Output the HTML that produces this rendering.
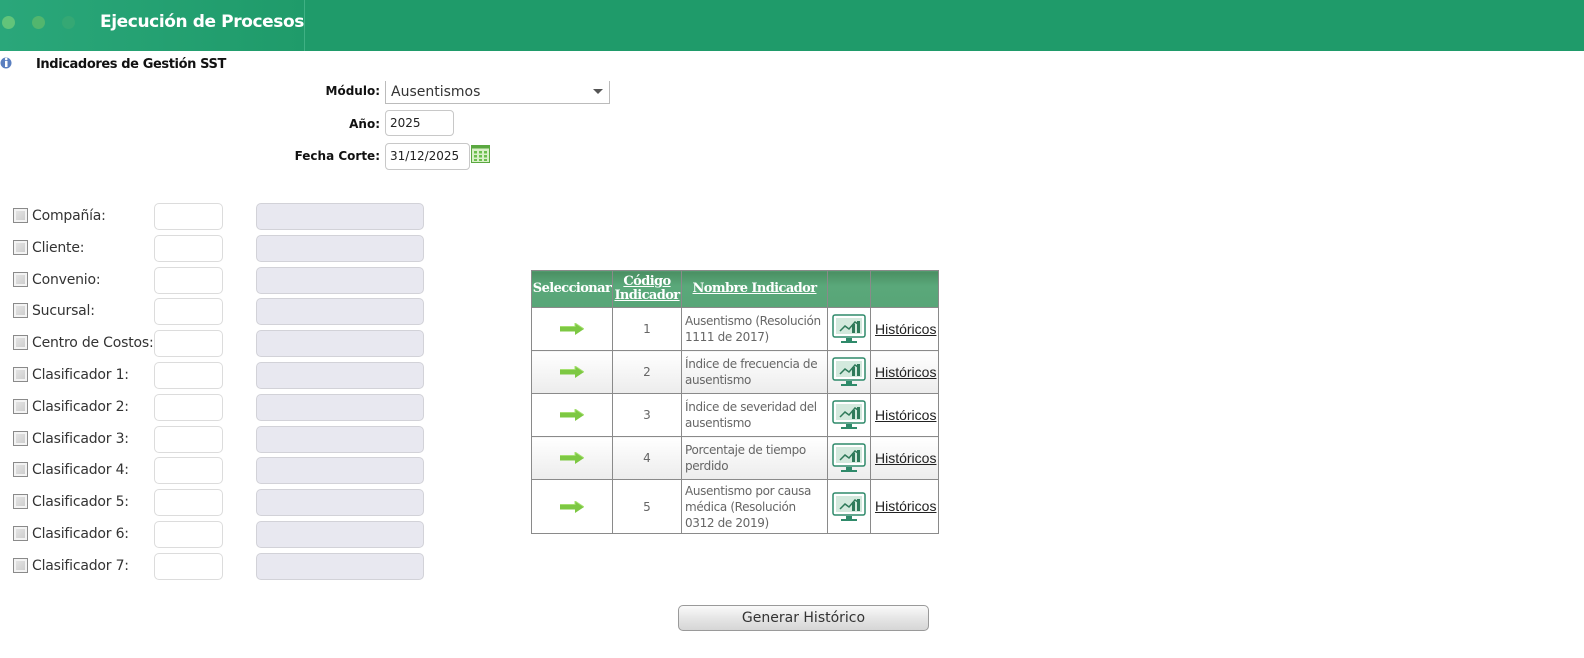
<!DOCTYPE html>
<html><head><meta charset="utf-8"><style>
*{box-sizing:border-box;margin:0;padding:0}
body{width:1584px;height:658px;position:relative;background:#fff;font-family:"Liberation Sans",sans-serif;overflow:hidden}
.a{position:absolute}
.hdr{left:0;top:0;width:1584px;height:51px;background:#1f9b6a}
.hl{left:0;top:0;width:305px;height:51px;background:linear-gradient(90deg,#2aa77a,#1f9b6a);border-right:1px solid #3fb184}
.dot{width:13px;height:13px;border-radius:50%;top:16px}
.lbl{font-size:13px;font-weight:bold;color:#111;text-align:right;width:120px}
.inp{border:1px solid #c8c8c8;border-radius:4px;background:#fff;font-size:13px;padding-left:4px;line-height:24px;color:#222}
.cb{width:15px;height:15px;border:1px solid #8a8a8a;background:linear-gradient(135deg,#e8e8e8,#c9c9c9);box-shadow:inset 0 0 0 2px #f3f3f3}
.rl{color:#333;font-family:"DejaVu Sans",sans-serif;font-size:14px;letter-spacing:-0.2px}
.i1{width:69px;height:27px;border:1px solid #dcdcdc;border-radius:5px;background:#fff}
.i2{width:168px;height:27px;border:1px solid #d2d2d8;border-radius:5px;background:#e8e8f0}
table{border-collapse:collapse;font-family:"DejaVu Sans",sans-serif;table-layout:fixed}
td,th{border:1px solid #8a8a8a}
th{background:linear-gradient(#4a8f62,#5aa87a 40%,#58a577);color:#fff;font-size:13px;font-family:"DejaVu Serif",serif;font-weight:bold;height:37px;line-height:14px;letter-spacing:-0.6px}
th u{color:#fff}
td{font-size:12px;color:#666;line-height:16px}
tr.o td{background:linear-gradient(#fff,#ececec)}
.arr{display:block;margin:0 auto;width:24px;height:12px}
.hist{color:#222;text-decoration:underline;font-family:"Liberation Sans",sans-serif;font-size:14px;padding-left:4px}
.btn{left:678px;top:605px;width:251px;height:26px;border:1px solid #9a9a9a;border-radius:5px;background:linear-gradient(#fafafa,#e6e6e6 50%,#d6d6d6);font-size:14px;color:#333;text-align:center;line-height:24px;font-family:"DejaVu Sans",sans-serif}
</style></head><body>
<div class="a hdr"></div><div class="a hl"></div>
<div class="a dot" style="left:2px;background:#62c47a"></div>
<div class="a dot" style="left:32px;background:#52b66e"></div>
<div class="a dot" style="left:62px;background:#35a874"></div>
<div class="a" style="left:100px;top:12px;color:#fff;font-size:17px;font-weight:bold;font-family:'DejaVu Sans',sans-serif;letter-spacing:-0.4px">Ejecución de Procesos</div>
<svg class="a" style="left:0;top:56px" width="13" height="14"><circle cx="6" cy="7" r="5.5" fill="#5a7fc0"/><rect x="5" y="5" width="2.5" height="6" fill="#fff"/><circle cx="6.2" cy="3" r="1.3" fill="#fff"/></svg>
<div class="a" style="left:36px;top:57px;font-size:13px;font-weight:bold;font-family:'DejaVu Sans',sans-serif;letter-spacing:-0.4px;color:#111">Indicadores de Gestión SST</div>
<div class="a lbl" style="left:260px;top:84px;font-family:'DejaVu Sans',sans-serif;font-size:12px">Módulo:</div>
<div class="a" style="left:385px;top:81px;width:225px;height:23px;border:1px solid #bbb;border-top:none;font-size:14px;color:#333;padding-left:5px;line-height:22px;font-family:'DejaVu Sans',sans-serif">Ausentismos<span style="position:absolute;right:6px;top:8px;border-left:5px solid transparent;border-right:5px solid transparent;border-top:5px solid #555"></span></div>
<div class="a lbl" style="left:260px;top:117px;font-family:'DejaVu Sans',sans-serif;font-size:12px">Año:</div>
<div class="a inp" style="left:385px;top:110px;width:69px;height:26px;font-family:'DejaVu Sans',sans-serif;font-size:12px">2025</div>
<div class="a lbl" style="left:260px;top:149px;font-family:'DejaVu Sans',sans-serif;font-size:12px">Fecha Corte:</div>
<div class="a inp" style="left:385px;top:143px;width:85px;height:27px;font-family:'DejaVu Sans',sans-serif;font-size:12px">31/12/2025</div>
<svg class="a" style="left:471px;top:145px" width="19" height="18"><rect x="0.5" y="0.5" width="18" height="17" fill="#d9f0c8" stroke="#5aa840"/><rect x="0.5" y="0.5" width="18" height="3" fill="#5aa840"/><g fill="#6bbf4e"><rect x="3" y="6" width="3" height="2.5"/><rect x="8" y="6" width="3" height="2.5"/><rect x="13" y="6" width="3" height="2.5"/><rect x="3" y="10" width="3" height="2.5"/><rect x="8" y="10" width="3" height="2.5"/><rect x="13" y="10" width="3" height="2.5"/><rect x="3" y="14" width="3" height="2"/><rect x="8" y="14" width="3" height="2"/><rect x="13" y="14" width="3" height="2"/></g></svg>

<div id="rows"></div>
<script>
var n=["Compañía:","Cliente:","Convenio:","Sucursal:","Centro de Costos:","Clasificador 1:","Clasificador 2:","Clasificador 3:","Clasificador 4:","Clasificador 5:","Clasificador 6:","Clasificador 7:"],h="";
for(var i=0;i<12;i++){var y=203+i*31.8;
h+='<div class="a cb" style="left:13px;top:'+(y+5)+'px"></div><div class="a rl" style="left:32px;top:'+(y+5)+'px">'+n[i]+'</div><div class="a i1" style="left:154px;top:'+y+'px"></div><div class="a i2" style="left:256px;top:'+y+'px"></div>';}
document.getElementById('rows').innerHTML=h;
</script>

<table class="a" style="left:531px;top:270px;width:408px">
<tr><th style="width:81px">Seleccionar</th><th style="width:69px"><u>Código<br>Indicador</u></th><th style="width:146px"><u>Nombre Indicador</u></th><th style="width:43px"></th><th></th></tr>
<tbody id="tb"></tbody></table>
<script>
var r=[["1","Ausentismo (Resolución 1111 de 2017)",43],["2","Índice de frecuencia de ausentismo",43],["3","Índice de severidad del ausentismo",43],["4","Porcentaje de tiempo perdido",43],["5","Ausentismo por causa médica (Resolución 0312 de 2019)",54]],t="";
var arr='<svg class="arr" viewBox="0 0 24 12"><path d="M0 3.5h15V0l9 6-9 6V8.5H0z" fill="#7dc843"/><path d="M0 3.5h15V0l9 6" fill="none" stroke="#a6e070" stroke-width="1"/></svg>';
var ic='<svg width="34" height="30" style="display:block;margin:0 auto" viewBox="0 0 34 30"><rect x="1" y="1" width="32" height="22" rx="2" fill="#fff" stroke="#2f8a6a" stroke-width="1.5"/><rect x="4" y="4" width="26" height="16" fill="#d3e9dd"/><path d="M8 17l5-5 4 3 6-7 3 2" stroke="#2f7a5a" stroke-width="1.5" fill="none"/><rect x="20" y="10" width="3" height="9" fill="#2f7a5a"/><rect x="25" y="7" width="3" height="12" fill="#2f7a5a"/><rect x="14" y="24" width="6" height="3" fill="#2f8a6a"/><rect x="9" y="27" width="16" height="2" fill="#2f8a6a"/></svg>';
for(var i=0;i<5;i++){t+='<tr class="'+(i%2?'o':'')+'" style="height:'+r[i][2]+'px"><td>'+arr+'</td><td style="text-align:center">'+r[i][0]+'</td><td style="padding:0 0 0 3px;letter-spacing:-0.35px">'+r[i][1]+'</td><td>'+ic+'</td><td><span class="hist">Históricos</span></td></tr>';}
document.getElementById('tb').innerHTML=t;
</script>
<div class="a btn">Generar Histórico</div>
</body></html>
